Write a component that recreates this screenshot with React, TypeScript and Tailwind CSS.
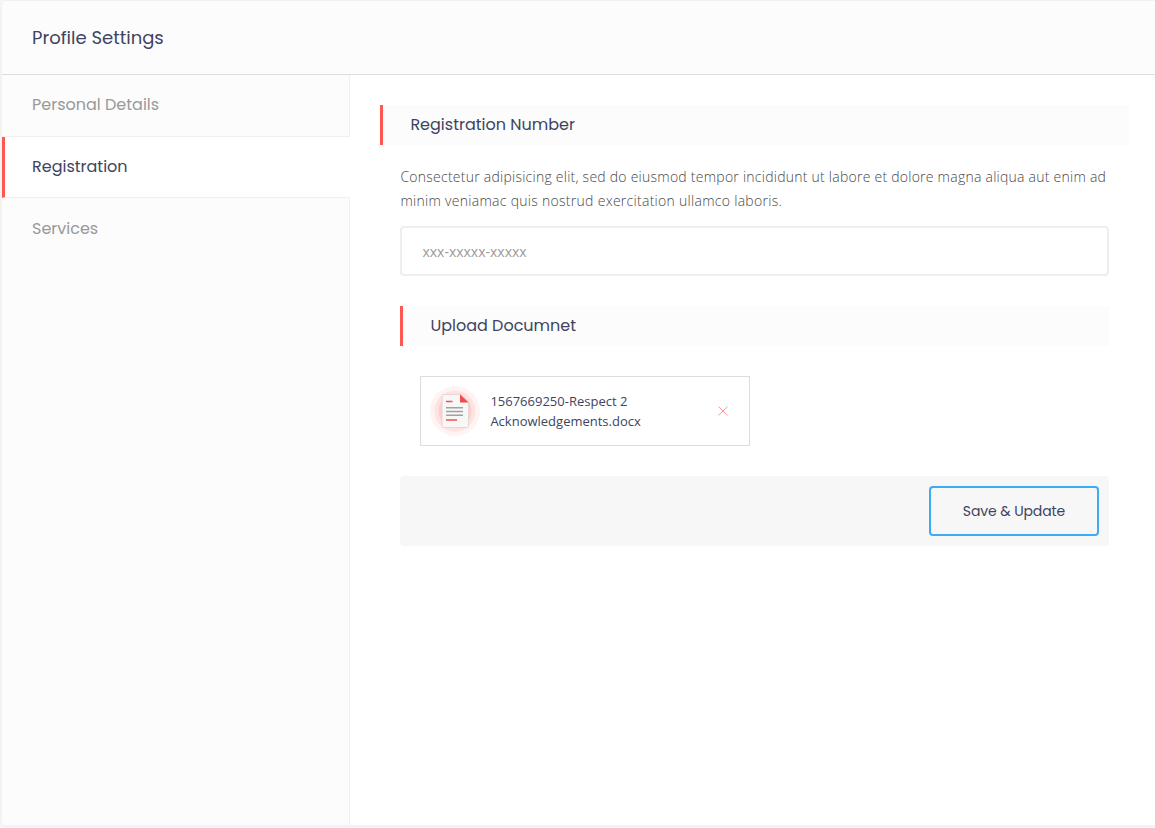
import React from "react";

const heading = "font-['Poppins','Inter',sans-serif] font-normal [font-feature-settings:'cv11'] whitespace-nowrap";
const body = "font-['Open_Sans',sans-serif]";

function DocumentIcon() {
  return (
    <svg className="h-[50px] w-[50px] shrink-0" viewBox="0 0 50 50" fill="none">
      <circle cx="25" cy="25" r="25" fill="#fff3f3" />
      <circle cx="25" cy="25" r="20.5" fill="#ffe3e2" />
      <circle cx="25" cy="25" r="16.5" fill="#ffcdcb" />
      <path d="M13 8.5h17l8.5 8.5V40.5a1 1 0 0 1-1 1H13a1 1 0 0 1-1-1V9.5a1 1 0 0 1 1-1Z" fill="#f7f7f7" stroke="#e5d5d5" strokeWidth="1" />
      <path d="M30 8.3l8.5 8.2H30Z" fill="#f44a48" />
      <path d="M16 15.5h6.5M16 34h11" stroke="#f15351" strokeWidth="1.5" />
      <path d="M16 21.7h17M16 25.5h17M16 29.2h17" stroke="#a2a2a2" strokeWidth="1.6" />
    </svg>
  );
}

function SectionTitle({ children, className }: { children: React.ReactNode; className?: string }) {
  return (
    <h2 className={`${heading} flex h-10 items-center border-l-3 border-[#ff5851] bg-[#fcfcfc] pl-[27.4px] text-base text-[#3d4461] ${className ?? ""}`}>
      {children}
    </h2>
  );
}

export default function App() {
  return (
    <div className="h-[828px] overflow-hidden bg-[#f7f7f7] pt-px pl-0.5">
      <div className="flex h-[824px] flex-col overflow-hidden rounded-l bg-white shadow-[0_0_5px_rgba(0,0,0,0.06)]">
        <header className="flex h-[74px] shrink-0 items-center border-b border-[#ddd] bg-[#fcfcfc] pl-[30px]">
          <h1 className={`${heading} text-lg text-[#3d4461]`}>Profile Settings</h1>
        </header>
        <div className="flex min-h-0 flex-1">
          <nav className={`${heading} flex w-[348px] shrink-0 flex-col bg-[#fcfcfc] text-base text-[#999]`}>
            <a className="flex h-[62px] items-center border-r border-b border-[#f0f0f0] pb-0.5 pl-[30px]">Personal Details</a>
            <a className="flex h-[61px] items-center border-b border-b-[#f0f0f0] border-l-3 border-l-[#ff5851] bg-white pb-px pl-[27px] text-[#3d4461]">Registration</a>
            <a className="flex flex-1 items-start border-r border-[#f0f0f0] pt-[19px] pl-[30px]">Services</a>
          </nav>
          <main className="flex-1 pt-[30px] pr-[26px] pl-[30px]">
            <SectionTitle>Registration Number</SectionTitle>
            <div className="px-5 pt-5">
              <p className={`${body} pl-[0.4px] text-sm leading-6 font-light tracking-[0.245px] whitespace-nowrap text-[#484848]`}>
                Consectetur adipisicing elit, sed do eiusmod tempor incididunt ut labore et dolore magna aliqua aut enim ad
                <br />
                <span className="tracking-[0.285px]">minim veniamac quis nostrud exercitation ullamco laboris.</span>
              </p>
              <input
                className={`${body} mt-[13px] block h-[50px] w-full rounded border-2 border-[#eee] bg-white pr-5 pl-[20.4px] text-sm text-[#666] outline-none placeholder:text-[#9b9b9b]`}
                placeholder="xxx-xxxxx-xxxxx"
              />
              <SectionTitle className="mt-[30px]">Upload Documnet</SectionTitle>
              <div className="mt-[30px] ml-5 flex h-[70px] w-[330px] items-center border border-[#ddd] pr-[21px] pl-[9px]">
                <DocumentIcon />
                <p className={`${body} ml-[10.4px] flex-1 text-[13px] leading-5 text-[#3d4461]`}>
                  1567669250-Respect 2<br />Acknowledgements.docx
                </p>
                <button aria-label="Remove" className="flex">
                  <svg className="mb-px h-[10px] w-[10px]" viewBox="0 0 10 10" stroke="#ff7b80" strokeWidth="0.8">
                    <path d="M.5.5l9 9M9.5.5l-9 9" />
                  </svg>
                </button>
              </div>
              <div className="mt-[30px] flex h-[70px] items-center justify-end rounded bg-[#f7f7f7] pr-2.5">
                <button className={`${heading} h-[50px] w-[170px] rounded border-2 border-[#3fabf3] text-sm tracking-[-0.1px] text-[#3d4461]`}>
                  Save &amp; Update
                </button>
              </div>
            </div>
          </main>
        </div>
      </div>
    </div>
  );
}
